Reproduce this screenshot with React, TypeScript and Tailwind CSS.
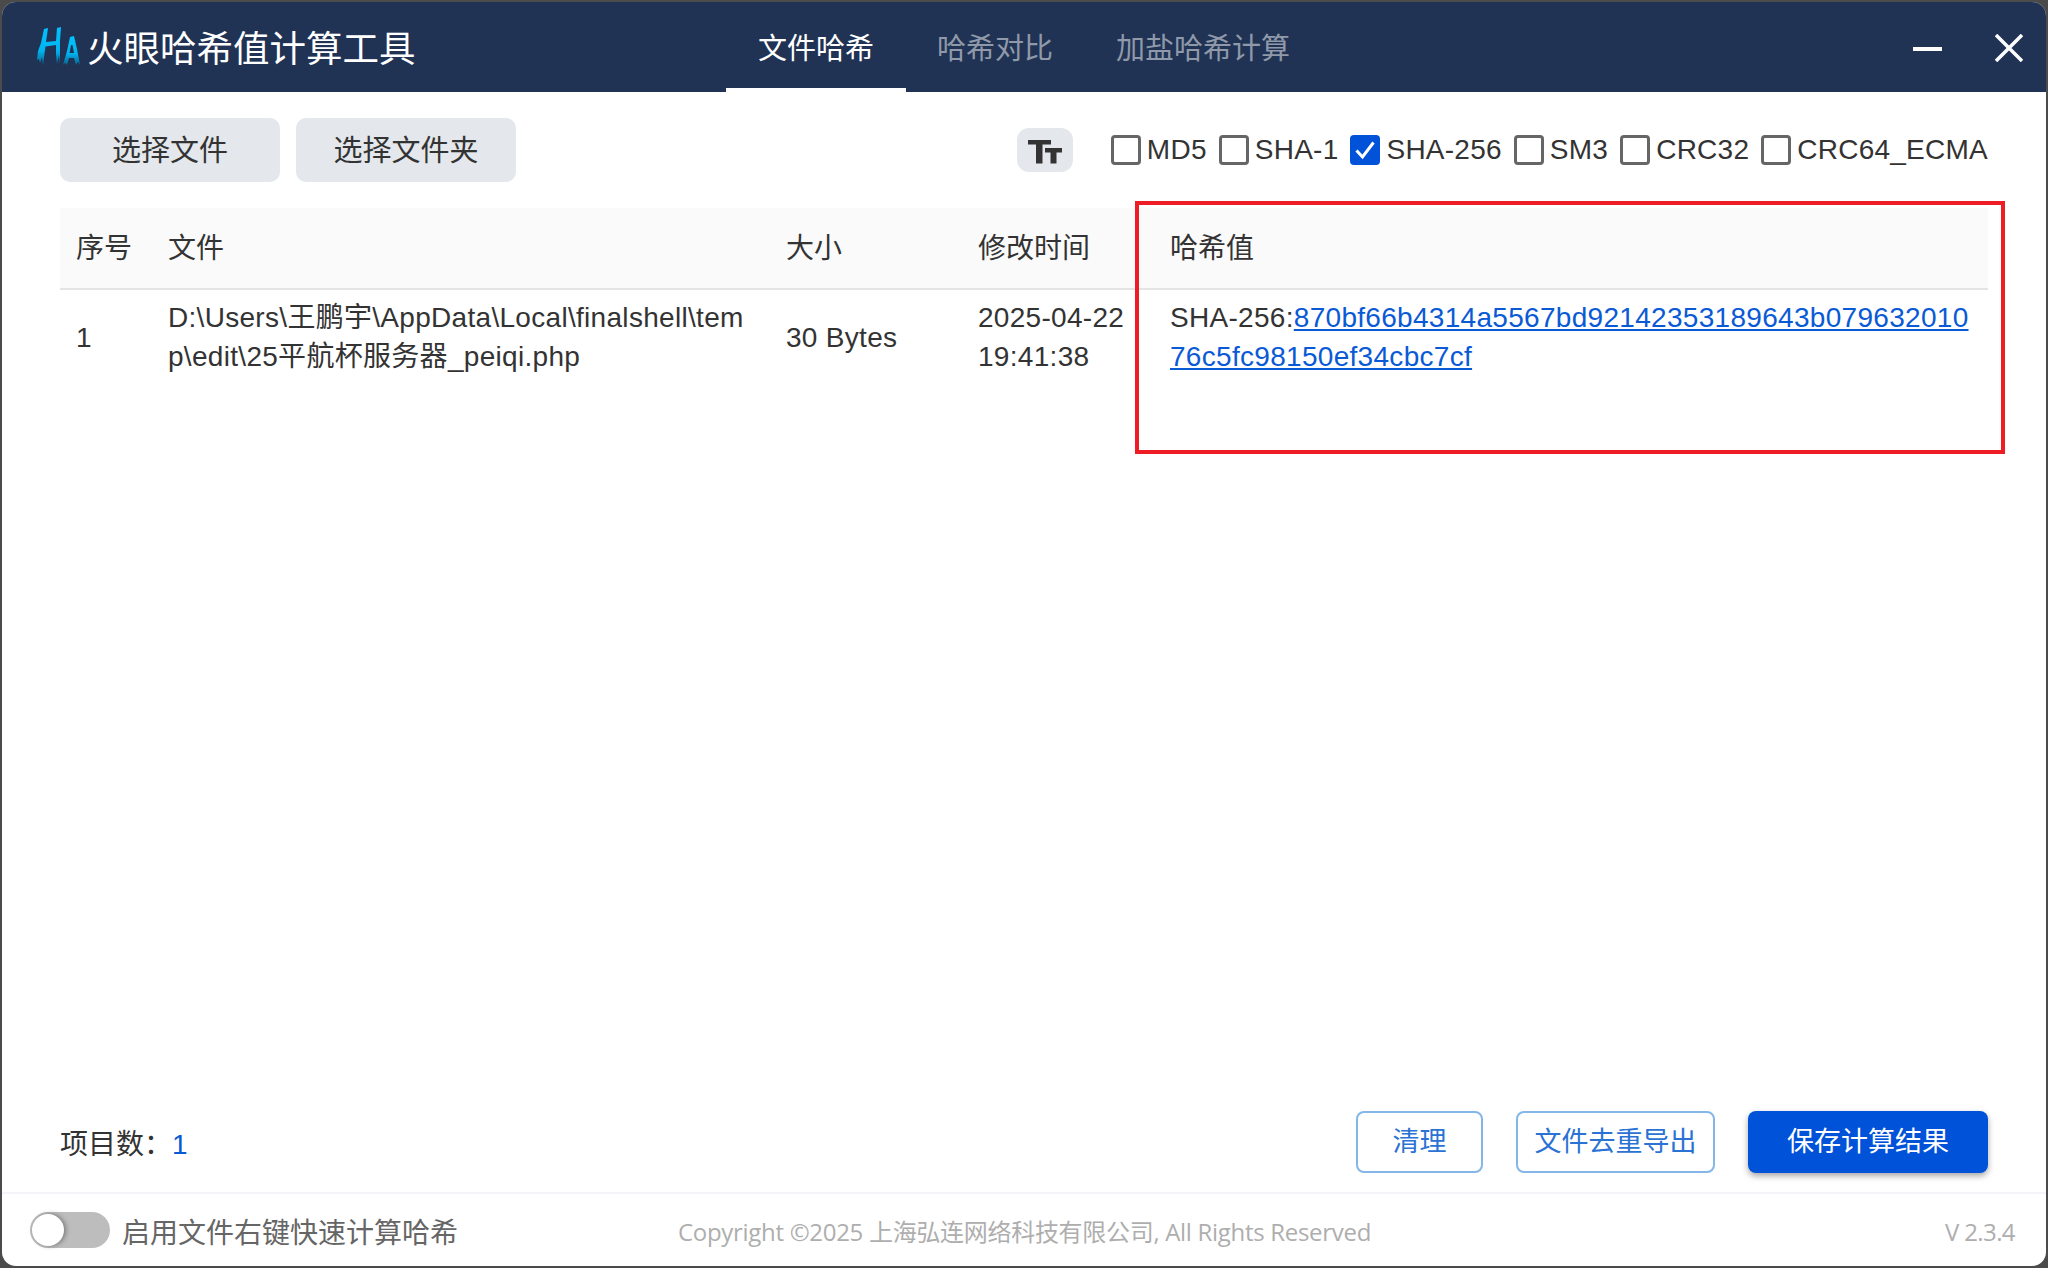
import { useState } from "react";

const font = "font-['Liberation_Sans','Noto_Sans_CJK_SC',sans-serif]";

const algorithms = [
  { name: "MD5", checked: false },
  { name: "SHA-1", checked: false },
  { name: "SHA-256", checked: true },
  { name: "SM3", checked: false },
  { name: "CRC32", checked: false },
  { name: "CRC64_ECMA", checked: false },
];

const columns = "grid grid-cols-[92px_618px_192px_192px_834px]";

function Logo() {
  return (
    <svg width="46" height="40" viewBox="0 0 46 40" className="shrink-0">
      <defs>
        <linearGradient id="ha" x1="0" y1="0" x2="0" y2="1">
          <stop offset="0" stopColor="#00c2ff" />
          <stop offset="0.6" stopColor="#00b4f0" />
          <stop offset="1" stopColor="#0b5f88" />
        </linearGradient>
      </defs>
      <path
        fill="url(#ha)"
        d="M8 2 L12 1 L10 15 L20 14 L21 1 L25 0 L24 14 L24 38 L23 28 L21 37 L20 27 L20 18 L9.500 19.500 L8 30 L7 39 L6 30 L4 36 L3 32 L1 33 L2 24 L5 16 Z"
      />
      <path
        fill="url(#ha)"
        d="M34 10 L38 9 L41 22 L44 38 L42 35 L40 38 L38 31 L33 31 L31 38 L29 36 L27 38 L31 24 Z M35 18 L33.500 26 L38 26 L36.500 18 Z"
        fillRule="evenodd"
      />
    </svg>
  );
}

function TextSizeIcon() {
  return (
    <svg width="34" height="26" viewBox="0 0 34 26" fill="#333">
      <path d="M0 1h23v4.500h-8.500v19h-6.500v-19h-8z" />
      <path d="M17 9h17v4.500h-5.500v11h-6v-11h-5.500z" />
    </svg>
  );
}

function AlgoCheck({ name, checked }: { name: string; checked: boolean }) {
  return (
    <label className="flex items-center gap-[6px]">
      {checked ? (
        <span className="flex h-[30px] w-[30px] items-center justify-center rounded-[4px] bg-[#0052d9]">
          <svg width="24" height="22" viewBox="0 0 24 22" fill="none">
            <path d="M3.500 11.500 L9.500 18 L20.500 3.500" stroke="white" strokeWidth="3" />
          </svg>
        </span>
      ) : (
        <span className="h-[30px] w-[30px] rounded-[4px] border-[3px] border-[#666] bg-white" />
      )}
      <span className="text-[28px] leading-[30px] tracking-[0.25px] text-[#333]">{name}</span>
    </label>
  );
}

export default function App() {
  const [contextMenu] = useState(false);

  return (
    <div className={`h-[1268px] w-[2048px] overflow-hidden bg-[#4b4b4b] p-[2px] pb-[2px] ${font}`}>
      <div className="relative flex h-[1264px] w-[2044px] flex-col overflow-hidden rounded-[14px] bg-white">
        <header className="flex h-[90px] shrink-0 items-center bg-[#203354] pl-[34px] pr-[23px] text-white">
          <Logo />
          <span className="ml-[5px] mt-[6px] w-[350px] text-[36.5px] leading-none">火眼哈希值计算工具</span>
          <nav className="ml-[289px] flex h-full items-end">
            <a className="flex h-full w-[180px] items-center border-b-4 border-white pl-8 pt-[10px] text-[29px]">文件哈希</a>
            <a className="flex h-full w-[178px] items-center border-b-4 border-transparent pl-[31px] pt-[10px] text-[29px] text-[#8f99a9]">哈希对比</a>
            <a className="flex h-full items-center border-b-4 border-transparent pl-8 pt-[10px] text-[29px] text-[#8f99a9]">加盐哈希计算</a>
          </nav>
          <div className="ml-auto flex items-center gap-[53px]">
            <span className="mt-[3px] h-1 w-[29px] bg-white" />
            <svg width="28" height="28" viewBox="0 0 28 28" className="mt-[1px]">
              <path d="M1 1 L27 27 M27 1 L1 27" stroke="white" strokeWidth="3.500" />
            </svg>
          </div>
        </header>

        <main className="flex min-h-0 flex-1 flex-col px-[58px]">
          <div className="flex items-center pt-[26px]">
            <button className="h-16 w-[220px] rounded-[10px] bg-[#e4e7eb] pt-1 text-[29px] text-[#333]">选择文件</button>
            <button className="ml-4 h-16 w-[220px] rounded-[10px] bg-[#e4e7eb] pt-1 text-[29px] text-[#333]">选择文件夹</button>
            <button className="ml-auto flex h-11 w-14 items-center justify-center rounded-xl bg-[#e4e7eb] pt-[3px]">
              <TextSizeIcon />
            </button>
            <div className="ml-[38px] flex items-center gap-[12px]">
              {algorithms.map((a) => (
                <AlgoCheck key={a.name} name={a.name} checked={a.checked} />
              ))}
            </div>
          </div>

          <div className="mt-[26px] flex-1 text-[28px] leading-[39px] text-[#333]">
            <div className={`${columns} h-[82px] items-center border-b-2 border-[#e4e4e4] bg-[#fafafa]`}>
              <div className="px-4">序号</div>
              <div className="px-4">文件</div>
              <div className="px-4">大小</div>
              <div className="px-4">修改时间</div>
              <div className="px-4">哈希值</div>
            </div>
            <div className={`${columns} items-center py-2 tracking-[0.3px]`}>
              <div className="px-4">1</div>
              <div className="break-all px-4">D:\Users\王鹏宇\AppData\Local\finalshell\temp\edit\25平航杯服务器_peiqi.php</div>
              <div className="px-4">30 Bytes</div>
              <div className="px-4">2025-04-22 19:41:38</div>
              <div className="break-all px-4">
                SHA-256:
                <a className="text-[#0a5ad6] underline">870bf66b4314a5567bd92142353189643b07963201076c5fc98150ef34cbc7cf</a>
              </div>
            </div>
          </div>

          <div className="flex items-center pb-[19px]">
            <span className="mt-[6px] text-[28px] text-[#333]">
              项目数：<span className="text-[#0a5ad6]">1</span>
            </span>
            <button className="ml-auto h-[62px] w-[127px] rounded-lg border-2 border-[#85b6e8] text-[27px] text-[#2a72d4]">清理</button>
            <button className="ml-[33px] h-[62px] w-[199px] rounded-lg border-2 border-[#85b6e8] text-[27px] text-[#2a72d4]">文件去重导出</button>
            <button className="ml-[33px] h-[62px] w-[240px] rounded-lg bg-[#0052d9] text-[27px] text-white shadow-[0_3px_6px_rgba(0,0,0,0.35)]">保存计算结果</button>
          </div>
        </main>

        <footer className="flex h-[74px] shrink-0 items-center border-t-2 border-[#f3f3f8] pl-7 pr-[31px]">
          <span
            className={`flex h-9 w-20 items-center rounded-full p-[2px] ${contextMenu ? "justify-end bg-[#0052d9]" : "bg-[#bdbdbd]"}`}
          >
            <span className="h-8 w-8 rounded-full bg-white shadow-[2px_0_5px_rgba(0,0,0,0.35)]" />
          </span>
          <span className="ml-3 mt-2 text-[28px] text-[#666]">启用文件右键快速计算哈希</span>
          <span className="ml-[220px] mt-[3px] font-['Open_Sans','Noto_Sans_CJK_SC',sans-serif] text-[24px] tracking-[-0.3px] text-[#aeaeae]">
            Copyright ©2025 上海弘连网络科技有限公司, All Rights Reserved
          </span>
          <span className="ml-auto mt-[3px] font-['Open_Sans',sans-serif] text-[24px] tracking-[-0.6px] text-[#aeaeae]">V 2.3.4</span>
        </footer>

        {/* annotation drawn over the screenshot */}
        <div className="pointer-events-none absolute left-[1133px] top-[199px] h-[253px] w-[870px] border-4 border-[#ee1c25]" />
      </div>
    </div>
  );
}
